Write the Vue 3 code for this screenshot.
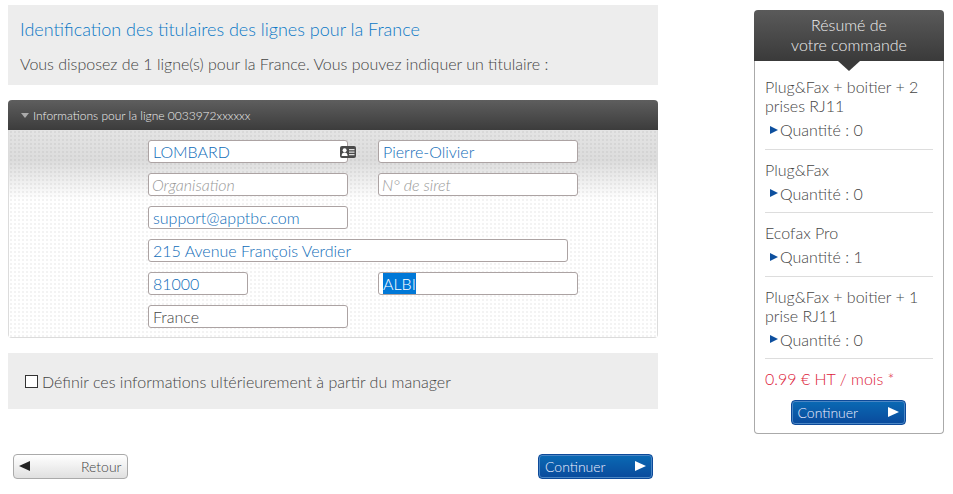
<script setup>
const rows = [
  [{ v: 'LOMBARD', w: 200, icon: true }, { v: 'Pierre-Olivier', w: 200 }],
  [{ p: 'Organisation', w: 200 }, { p: 'N° de siret', w: 200 }],
  [{ v: 'support@apptbc.com', w: 200 }],
  [{ v: '215 Avenue François Verdier', w: 420 }],
  [{ v: '81000', w: 100, gap: 130 }, { s: 'ALBI', w: 200 }],
  [{ v: 'France', w: 200, grey: true }]
]
const items = [
  { name: 'Plug&Fax + boitier + 2 prises RJ11', q: 0 },
  { name: 'Plug&Fax', q: 0 },
  { name: 'Ecofax Pro', q: 1 },
  { name: 'Plug&Fax + boitier + 1 prise RJ11', q: 0 }
]
</script>

<template>
  <div class="page">
    <main class="left">
      <section class="intro">
        <h1>Identification des titulaires des lignes pour la France</h1>
        <p>Vous disposez de 1 ligne(s) pour la France. Vous pouvez indiquer un titulaire :</p>
      </section>

      <section class="panel">
        <div class="panel-head"><span class="tri"></span>Informations pour la ligne 0033972xxxxxx</div>
        <div class="form">
          <div v-for="(row, i) in rows" :key="i" class="row">
            <div
              v-for="(f, j) in row"
              :key="j"
              class="field"
              :class="{ ph: f.p, grey: f.grey }"
              :style="{ width: f.w + 'px', marginRight: (f.gap || 30) + 'px' }"
            >
              <span v-if="f.s" class="sel">{{ f.s }}</span>
              <template v-else>{{ f.v || f.p }}</template>
              <svg v-if="f.icon" class="card" width="16" height="12" viewBox="0 0 16 12">
                <rect width="16" height="12" rx="2" fill="#4a4a4a" />
                <circle cx="4.6" cy="4.2" r="2" fill="#fff" />
                <path d="M1.6 10c0-2.3 1.2-3.4 3-3.4s3 1.1 3 3.4z" fill="#fff" />
                <path d="M9 3h5.5v1.3H9zM9 5.5h5.5v1.3H9zM9 8h5.5v1.3H9z" fill="#ddd" />
              </svg>
            </div>
          </div>
        </div>
      </section>

      <section class="later">
        <span class="check"></span>Définir ces informations ultérieurement à partir du manager
      </section>

      <div class="actions">
        <button class="btn back"><span class="larr"></span>Retour</button>
        <button class="btn go">Continuer<span class="rarr"></span></button>
      </div>
    </main>

    <aside class="side">
      <div class="side-head">Résumé de<br />votre commande</div>
      <div class="side-body">
        <div v-for="(it, i) in items" :key="i" class="item">
          <div class="name">{{ it.name }}</div>
          <div class="qty"><span class="mini"></span>Quantité : {{ it.q }}</div>
        </div>
        <div class="price">0.99 € HT / mois *</div>
        <div class="side-btn"><button class="btn go">Continuer<span class="rarr"></span></button></div>
      </div>
    </aside>
  </div>
</template>

<style scoped>
.page {
  display: flex;
  align-items: flex-start;
  width: 953px;
  height: 494px;
  overflow: hidden;
  padding-left: 8px;
  box-sizing: border-box;
  font-family: Lato, "Liberation Sans", sans-serif;
  font-weight: 300;
  color: #444;
  background: #fff;
}
.left { width: 650px; padding-top: 5px; }
.intro {
  height: 80px;
  background: #ededed;
  padding: 13px 12px 0;
  box-sizing: border-box;
}
h1 { margin: 0; font-size: 18px; line-height: 22px; font-weight: 300; color: #0b78c6; }
p { margin: 14px 0 0; font-size: 16px; line-height: 20px; }
.panel {
  height: 238px;
  margin-top: 15px;
  border: 1px solid #dcdcdc;
  border-top: 0;
  border-radius: 4px;
  box-sizing: border-box;
  background: #fff;
}
.panel-head {
  height: 30px;
  margin: 0 -1px;
  background: linear-gradient(#5e5e5e, #3c3c3c);
  border-radius: 4px 4px 0 0;
  color: #eee;
  font-size: 12px;
  padding-left: 13px;
  display: flex;
  align-items: center;
}
.tri {
  width: 0;
  height: 0;
  border-left: 4px solid transparent;
  border-right: 4px solid transparent;
  border-top: 5px solid #aaa;
  margin-right: 4px;
}
.form {
  height: 207px;
  padding: 10px 0 0 139px;
  box-sizing: border-box;
  background:
    radial-gradient(circle, rgba(0, 0, 0, 0.05) 0.7px, transparent 0.8px) 0 0 / 4px 4px repeat-x,
    linear-gradient(#e4e4e4 0, #dcdcdc 30px, #fff 70px);
  background-size: 4px 4px, auto;
  background-repeat: repeat, no-repeat;
}
.row { display: flex; height: 33px; }
.field {
  position: relative;
  height: 23px;
  box-sizing: border-box;
  border: 1px solid #aca3a3;
  border-radius: 3px;
  background: #fff;
  padding-left: 4px;
  font-size: 16px;
  line-height: 22px;
  color: #0f6cb8;
  white-space: nowrap;
}
.ph { color: #999; font-style: italic; padding-left: 3px; }
.grey { color: #444; }
.sel { background: #0078d7; color: #fff; display: inline-block; height: 21px; }
.card { position: absolute; right: -9px; top: 5px; }
.later {
  height: 56px;
  margin-top: 15px;
  background: #ededed;
  padding-left: 17px;
  display: flex;
  align-items: center;
  font-size: 16px;
  box-sizing: border-box;
}
.check {
  width: 11px;
  height: 11px;
  border: 1px solid #333;
  background: #fff;
  margin-right: 4px;
}
.actions {
  display: flex;
  justify-content: space-between;
  padding: 45px 5px 0;
}
.btn {
  position: relative;
  display: block;
  height: 25px;
  width: 115px;
  box-sizing: border-box;
  border-radius: 4px;
  font-family: inherit;
  font-weight: 400;
  font-size: 14px;
  padding: 0;
  text-align: left;
}
.back {
  border: 1px solid #aaa;
  background: linear-gradient(#fff, #e0e0e0);
  color: #444;
  padding-left: 67px;
  font-weight: 300;
}
.go {
  border: 1px solid #0d4a9a;
  box-shadow: inset 0 0 0 1px #4a86c4;
  background: linear-gradient(#0a6ab4, #0a4a9c);
  color: #eef;
  padding-left: 6px;
  font-weight: 300;
}
.larr {
  position: absolute;
  left: 5px;
  top: 6px;
  border-right: 11px solid #222;
  border-top: 5.5px solid transparent;
  border-bottom: 5.5px solid transparent;
}
.rarr {
  position: absolute;
  right: 6px;
  top: 6px;
  border-left: 11px solid #fff;
  border-top: 5.5px solid transparent;
  border-bottom: 5.5px solid transparent;
}
.side {
  width: 190px;
  margin: 10px 0 0 96px;
  position: relative;
}
.side-head {
  position: relative;
  height: 51px;
  background: linear-gradient(#5a5a5a, #3a3a3a);
  border-radius: 4px 4px 0 0;
  color: #eee;
  font-size: 16px;
  line-height: 20px;
  text-align: center;
  padding-top: 5px;
  box-sizing: border-box;
}
.side-head::after {
  content: "";
  position: absolute;
  left: 84px;
  bottom: -10px;
  border-left: 11px solid transparent;
  border-right: 11px solid transparent;
  border-top: 10px solid #3a3a3a;
}
.side-body {
  height: 373px;
  box-sizing: border-box;
  border: 1px solid #aaa;
  border-top: 0;
  border-radius: 0 0 4px 4px;
  padding: 16px 10px 0;
}
.item {
  font-size: 16px;
  line-height: 19px;
  border-bottom: 1px solid #ddd;
  padding-bottom: 9.5px;
  margin-bottom: 10px;
}
.qty { margin-top: 5px; padding-left: 5px; display: flex; align-items: center; }
.mini {
  border-left: 8px solid #0d4f9e;
  border-top: 4.5px solid transparent;
  border-bottom: 4.5px solid transparent;
  margin-right: 2px;
}
.price { color: #dd1a3a; font-size: 16px; line-height: 20px; margin-top: 10px; }
.side-btn { display: flex; justify-content: center; margin-top: 11px; margin-left: -2px; }
</style>
